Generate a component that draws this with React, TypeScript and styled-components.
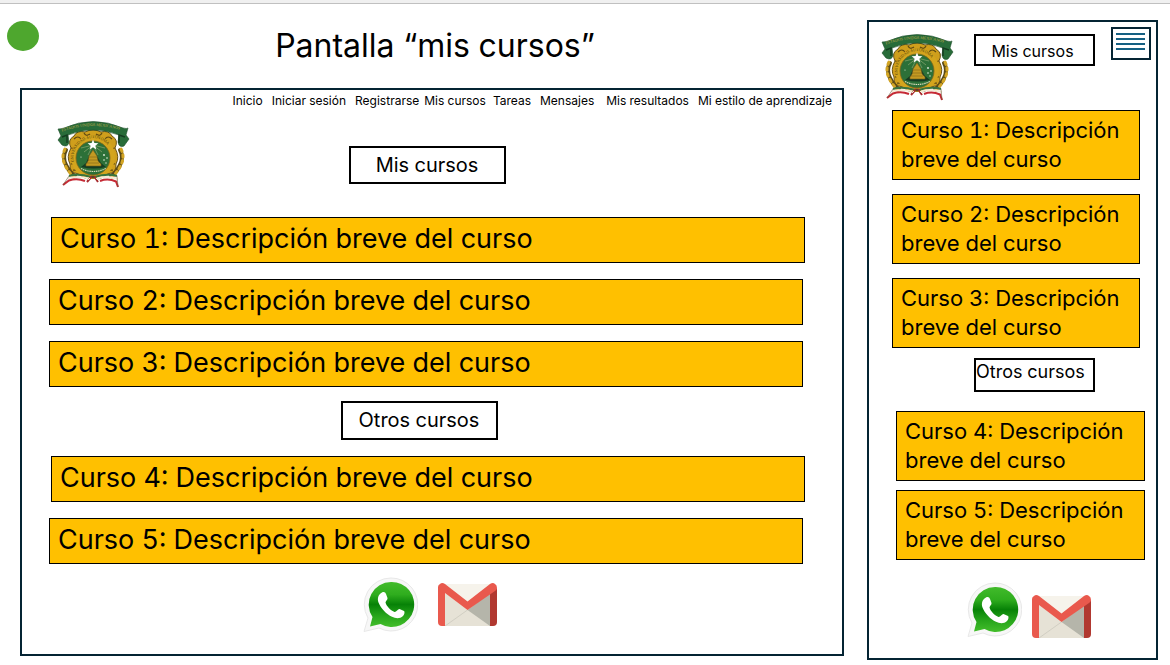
import React, { useId } from 'react';
import styled, { createGlobalStyle } from 'styled-components';

const GlobalStyle = createGlobalStyle`
  *, *::before, *::after { box-sizing: border-box; }
  body {
    margin: 0;
    background: #fff;
    color: #000;
    font-family: Inter, "Liberation Sans", sans-serif;
    font-variant-numeric: tabular-nums;
  }
  h1, h2, p, ul { margin: 0; padding: 0; font-weight: 400; }
  ul { list-style: none; }
  a { color: inherit; text-decoration: none; }
  svg { display: block; }
`;

const ink = '#042433';

const Page = styled.div`
  border-top: 3px solid #f0f0f0;
`;

const Board = styled.main`
  display: grid;
  grid-template-columns: minmax(0, 837fr) minmax(0, 291fr);
  gap: 23px;
  align-items: start;
  padding: 0 12px 4px 7px;
  border-top: 1px solid #c0c0c0;
`;

const TitleBar = styled.header`
  display: flex;
  align-items: flex-start;
  height: 84px;
  padding-top: 17px;
`;

const StatusDot = styled.span`
  flex: none;
  width: 32px;
  height: 30px;
  border-radius: 50%;
  background: #4ea72e;
`;

const Title = styled.h1`
  flex: 1;
  padding: 5px 0 0 0;
  margin-right: 13px;
  font-size: 32px;
  line-height: 40px;
  text-align: center;
`;

const DesktopFrame = styled.section`
  display: flex;
  flex-direction: column;
  min-height: 568px;
  margin-left: 13px;
  border: 2px solid ${ink};
`;

const Nav = styled.nav`
  display: flex;
  justify-content: flex-end;
  padding: 3px 10px 0 0;
  font-size: 12px;
  line-height: 16px;
  white-space: nowrap;
`;

const NavLink = styled.a<{ $gap: number }>`
  margin-left: ${(p) => p.$gap}px;
`;

const DesktopHead = styled.div`
  display: grid;
  grid-template-columns: 1fr auto 1fr;
  align-items: start;
  height: 108px;
  padding: 12px 39px 0 29px;
`;

const CrestSlot = styled.div`
  padding-left: 6px;
`;

const Label = styled.h2<{ $width: number; $height: number; $size: number }>`
  width: ${(p) => p.$width}px;
  height: ${(p) => p.$height}px;
  border: 2px solid #000;
  font-size: ${(p) => p.$size}px;
  line-height: ${(p) => p.$height - 4}px;
  text-align: center;
`;

const DesktopLabel = styled(Label)<{ $top?: number }>`
  margin-top: ${(p) => p.$top ?? 0}px;
`;

const DesktopBody = styled.div`
  display: flex;
  flex-direction: column;
  padding: 0 37px 0 27px;
`;

const CourseList = styled.ul<{ $gap: number }>`
  display: flex;
  flex-direction: column;
  gap: ${(p) => p.$gap}px;
`;

const Divider = styled.div`
  display: flex;
  justify-content: center;
  padding: 14px 16px 16px 0;
`;

const CourseItem = styled.li<{ $side: 'left' | 'right' }>`
  padding-${(p) => p.$side}: 2px;
`;

const CourseBar = styled.a`
  display: block;
  height: 46px;
  padding: 0 8px;
  border: 1px solid #000;
  background: #ffc000;
  font-size: 27px;
  line-height: 42px;
  white-space: nowrap;
`;

const Contacts = styled.div<{ $gap: number }>`
  display: flex;
  align-items: flex-start;
  justify-content: center;
  gap: ${(p) => p.$gap}px;
`;

const DesktopContacts = styled(Contacts)`
  padding: 13px 0 0 6px;
`;

const MailLink = styled.a<{ $drop: number }>`
  margin-top: ${(p) => p.$drop}px;
`;

const PhoneFrame = styled.section`
  min-height: 640px;
  margin-top: 16px;
  border: 2px solid ${ink};
`;

const PhoneHead = styled.div`
  display: flex;
  align-items: flex-start;
  justify-content: space-between;
  height: 88px;
  padding: 5px 5px 0 12px;
`;

const PhoneCrest = styled.div`
  padding-top: 7px;
`;

const PhoneLabelSlot = styled.div`
  padding: 7px 0 0 4px;
`;

const PhoneLabel = styled(Label)`
  padding-right: 4px;
  line-height: 31px;
`;

const PhoneDivider = styled.div`
  display: flex;
  justify-content: center;
  padding: 10px 0 19px 44px;
`;

const OtherLabel = styled(Label)`
  line-height: 24px;
  text-align: left;
`;

const MenuButton = styled.button`
  display: flex;
  flex-direction: column;
  gap: 3px;
  width: 40px;
  height: 33px;
  padding: 4px 4px 0 3px;
  border: 2px solid ${ink};
  background: #fff;
`;

const MenuLine = styled.span`
  width: 29px;
  height: 2px;
  background: #156082;
`;

const PhoneCourses = styled.div<{ $left: number; $right: number }>`
  padding: 0 ${(p) => p.$right}px 0 ${(p) => p.$left}px;
`;

const PhoneCourse = styled.a`
  display: block;
  min-height: 70px;
  padding: 5px 8px;
  border: 1px solid #000;
  background: #ffc000;
  font-size: 22px;
  font-optical-sizing: none;
  line-height: 29px;
`;

const PhoneContacts = styled(Contacts)`
  padding: 22px 0 0 33px;
`;

const Crest = () => {
  const id = useId();
  return (
    <svg width="73" height="68" viewBox="0 0 73 68" role="img" aria-label="Escudo de la universidad">
      <defs>
        <path id={`${id}b`} d="M5 10.500 Q36 -0.500 68 10.500" />
        <path id={`${id}r`} d="M17 41 A19.500 19.500 0 1 1 55 41" />
      </defs>
      <g fill="none" stroke="#5a4a18" strokeWidth="4" strokeLinecap="round">
        <path d="M9 29Q5 36 9 44T18 55M63 29Q67 36 63 44T54 55" />
      </g>
      <g fill="none" stroke="#d3a524" strokeWidth="3" strokeLinecap="round" strokeDasharray="2.500 3.500">
        <path d="M8 28Q4 36 8 44T17 56M64 28Q68 36 64 44T55 56" />
      </g>
      <path d="M17 15Q20 9 28 11Q36 7 44 11Q52 9 55 15Q62 19 58 27Q63 36 59 43Q60 52 50 53Q43 60 36 57Q29 60 22 53Q12 52 13 43Q9 36 14 27Q10 19 17 15Z" fill="#cf9f1c" stroke="#6b5314" strokeWidth="1" />
      <g fill="none" stroke="#5f4a12" strokeWidth="1.2">
        <path d="M17 18q4-4 7 0t-4 4M55 18q-4-4-7 0t4 4M14 27q5 0 3 5M58 27q-5 0-3 5M14 43q4-1 5 3t-3 3M58 43q-4-1-5 3t3 3M24 53q3-2 5 1M48 53q-3-2-5 1" />
        <path d="M27 12q2 4 6 1M45 12q-2 4-6 1" />
      </g>
      <circle cx="36" cy="36" r="22" fill="#d4a51d" />
      <text fontSize="4" fill="#4a3a0a" fontFamily="Liberation Serif, serif">
        <textPath href={`#${id}r`}>UNIVERSIDAD AUTONOMA</textPath>
      </text>
      <circle cx="36" cy="37" r="17" fill="#2c7038" stroke="#7d641b" strokeWidth="0.8" />
      <path d="M36 24L27 31M36 24L31 34M36 24L41 34M36 24L45 31M36 24L24 27M36 24L48 27" stroke="#9bb078" strokeWidth="0.6" />
      <path d="M36 18.500l1.400 3.600 4 .2-3.100 2.400 1.100 3.800-3.400-2.200-3.400 2.200 1.100-3.800-3.100-2.400 4-.2z" fill="#fff" />
      <path d="M24 46l5-4 3-7 4-5 4 5 4 7 5 4q-12 3-25 0z" fill="#163d23" />
      <path d="M29 43q3-3 3-8l4-6 4 6q0 5 4 8v2H29z" fill="#c39a22" stroke="#77601c" strokeWidth="0.6" />
      <path d="M32 36h8M31 39h10M30 42h12" stroke="#80661a" strokeWidth="0.6" />
      <g fill="#e5eee0">
        <circle cx="47" cy="34" r="0.9" /><circle cx="50" cy="37" r="0.8" /><circle cx="47" cy="39" r="0.8" />
        <circle cx="24" cy="36" r="0.6" /><circle cx="49" cy="42" r="0.7" />
      </g>
      <path d="M24 47.500Q36 53.500 49 47.500" fill="none" stroke="#d9d9b8" strokeWidth="1.200" strokeDasharray="1.500 .7" />
      <path d="M7 7Q36-6 66 7Q70 8 71 7L69 14 72 18 67 25Q62 27 61 21L62 14Q36 4 11 14L12 21Q11 27 5 24L1 19 4 15 1 8Q4 8 7 7Z" fill="#286c39" stroke="#1d4d28" strokeWidth="0.6" />
      <path d="M5 16l5-2v8M68 16l-6-2v8" fill="none" stroke="#143c20" strokeWidth="1.500" />
      <text fontSize="4" fill="#c3ae4c" fontFamily="Liberation Serif, serif">
        <textPath href={`#${id}b`}>ESTADOS UNIDOS MEXICANOS</textPath>
      </text>
      <g fill="none" strokeWidth="2">
        <path d="M12 55Q21 52 34 56M60 55Q50 52 38 56" stroke="#39733f" />
        <path d="M11 57.500Q20 54.500 32 57.500M61 58Q51 54.500 40 57.500" stroke="#f3ecd8" />
        <path d="M6 64L12 59.500Q20 57 28 60M61 66L59 60.500Q51 57 43 60" stroke="#c52a35" />
        <path d="M35 55l-5 6M37 55l4 6" stroke="#a82c30" />
        <path d="M33 57l-2 2M39 57l3 3" stroke="#f3ecd8" strokeWidth="1" />
      </g>
      <path d="M6 64L12 55M61 66L60 55" stroke="#6b5538" strokeWidth="0.6" />
      <circle cx="36" cy="56" r="1.600" fill="#5c4326" />
    </svg>
  );
};

const WhatsAppIcon = ({ size }: { size: number }) => {
  const id = useId();
  return (
    <svg width={size} height={size} viewBox="0 0 55 55" aria-hidden="true">
      <defs>
        <linearGradient id={id} x1="0" y1="0" x2="0" y2="1">
          <stop offset="0" stopColor="#42bb2b" />
          <stop offset="0.28" stopColor="#2fad1e" />
          <stop offset="0.5" stopColor="#078207" />
          <stop offset="0.75" stopColor="#27a51b" />
          <stop offset="1" stopColor="#43be2b" />
        </linearGradient>
      </defs>
      <path d="M28 1A26.5 26.5 0 1 1 16 51L1 54.500 5 41A26.500 26.500 0 0 1 28 1Z" fill="#f7f7f7" stroke="#e8e8e8" strokeWidth="1" />
      <path d="M28 5A22.500 22.500 0 1 1 17.500 47L7 49.500 9.500 40A22.500 22.500 0 0 1 28 5Z" fill={`url(#${id})`} />
      <path d="M19 15.500C21 14.500 22.500 15.500 23 17L24.500 21C25 22.500 22.500 24 22.500 25.500C23.500 29.500 28 33.500 31.500 35C33 35.500 35 31.800 36.500 32L41 34C42 34.500 41.500 37.500 40 39C37 42 32.500 41.500 29 39.800C23.500 37.500 17.500 31 15.500 25.500C14 21.500 15.500 17 19 15.500Z" fill="#fff" />
    </svg>
  );
};

const GmailIcon = () => (
  <svg width="59" height="43" viewBox="0 0 59 43" aria-hidden="true">
    <path d="M4 1H55V43H4Z" fill="#f6f3eb" />
    <path d="M7 10V43H52V10L29.500 27Z" fill="#e6e2d6" />
    <path d="M29.500 27L52 10V43Z" fill="#b5b5aa" />
    <path d="M29.500 27L7 43" stroke="#cbc9be" strokeWidth="0.8" />
    <path d="M52 10L59 5V39Q59 43 55 43H52Z" fill="#b13830" />
    <path d="M7 10V43H4Q0 43 0 39V4Q0 2 2 1Q4-1 7 1L29.500 18.500L52 1Q55-1 57 1Q59 2 59 5Q59 7 57 8L29.500 27Z" fill="#e9594d" />
  </svg>
);

const navItems: { label: string; gap: number }[] = [
  { label: 'Inicio', gap: 0 },
  { label: 'Iniciar sesión', gap: 9 },
  { label: 'Registrarse', gap: 9 },
  { label: 'Mis cursos', gap: 5 },
  { label: 'Tareas', gap: 7 },
  { label: 'Mensajes', gap: 9 },
  { label: 'Mis resultados', gap: 12 },
  { label: 'Mi estilo de aprendizaje', gap: 9 },
];

const courseName = (n: number) => `Curso ${n}: Descripción breve del curso`;

const DesktopCourses = ({ courses }: { courses: { n: number; side: 'left' | 'right' }[] }) => (
  <CourseList $gap={16}>
    {courses.map(({ n, side }) => (
      <CourseItem key={n} $side={side}>
        <CourseBar href={`#curso-${n}`}>{courseName(n)}</CourseBar>
      </CourseItem>
    ))}
  </CourseList>
);

const PhoneCourseList = ({ numbers, gap }: { numbers: number[]; gap: number }) => (
  <CourseList $gap={gap}>
    {numbers.map((n) => (
      <li key={n}>
        <PhoneCourse href={`#curso-${n}`}>{courseName(n)}</PhoneCourse>
      </li>
    ))}
  </CourseList>
);

export default function App() {
  return (
    <Page>
      <GlobalStyle />
      <Board>
        <div>
          <TitleBar>
            <StatusDot />
            <Title>Pantalla “mis cursos”</Title>
          </TitleBar>
          <DesktopFrame>
            <Nav>
              {navItems.map(({ label, gap }) => (
                <NavLink key={label} href="#" $gap={gap}>{label}</NavLink>
              ))}
            </Nav>
            <DesktopHead>
              <CrestSlot><Crest /></CrestSlot>
              <DesktopLabel $width={157} $height={38} $size={20} $top={25}>Mis cursos</DesktopLabel>
            </DesktopHead>
            <DesktopBody>
              <DesktopCourses courses={[{ n: 1, side: 'left' }, { n: 2, side: 'right' }, { n: 3, side: 'right' }]} />
              <Divider>
                <DesktopLabel $width={157} $height={39} $size={20}>Otros cursos</DesktopLabel>
              </Divider>
              <DesktopCourses courses={[{ n: 4, side: 'left' }, { n: 5, side: 'right' }]} />
              <DesktopContacts $gap={20}>
                <a href="#whatsapp" aria-label="WhatsApp"><WhatsAppIcon size={55} /></a>
                <MailLink href="#gmail" aria-label="Gmail" $drop={6}><GmailIcon /></MailLink>
              </DesktopContacts>
            </DesktopBody>
          </DesktopFrame>
        </div>
        <PhoneFrame>
          <PhoneHead>
            <PhoneCrest><Crest /></PhoneCrest>
            <PhoneLabelSlot>
              <PhoneLabel $width={121} $height={32} $size={16}>Mis cursos</PhoneLabel>
            </PhoneLabelSlot>
            <MenuButton aria-label="Menú">
              <MenuLine /><MenuLine /><MenuLine /><MenuLine />
            </MenuButton>
          </PhoneHead>
          <PhoneCourses $left={23} $right={16}>
            <PhoneCourseList numbers={[1, 2, 3]} gap={14} />
          </PhoneCourses>
          <PhoneDivider>
            <OtherLabel $width={121} $height={34} $size={18}>Otros cursos</OtherLabel>
          </PhoneDivider>
          <PhoneCourses $left={27} $right={11}>
            <PhoneCourseList numbers={[4, 5]} gap={9} />
          </PhoneCourses>
          <PhoneContacts $gap={10}>
            <a href="#whatsapp" aria-label="WhatsApp"><WhatsAppIcon size={55} /></a>
            <MailLink href="#gmail" aria-label="Gmail" $drop={13}><GmailIcon /></MailLink>
          </PhoneContacts>
        </PhoneFrame>
      </Board>
    </Page>
  );
}
